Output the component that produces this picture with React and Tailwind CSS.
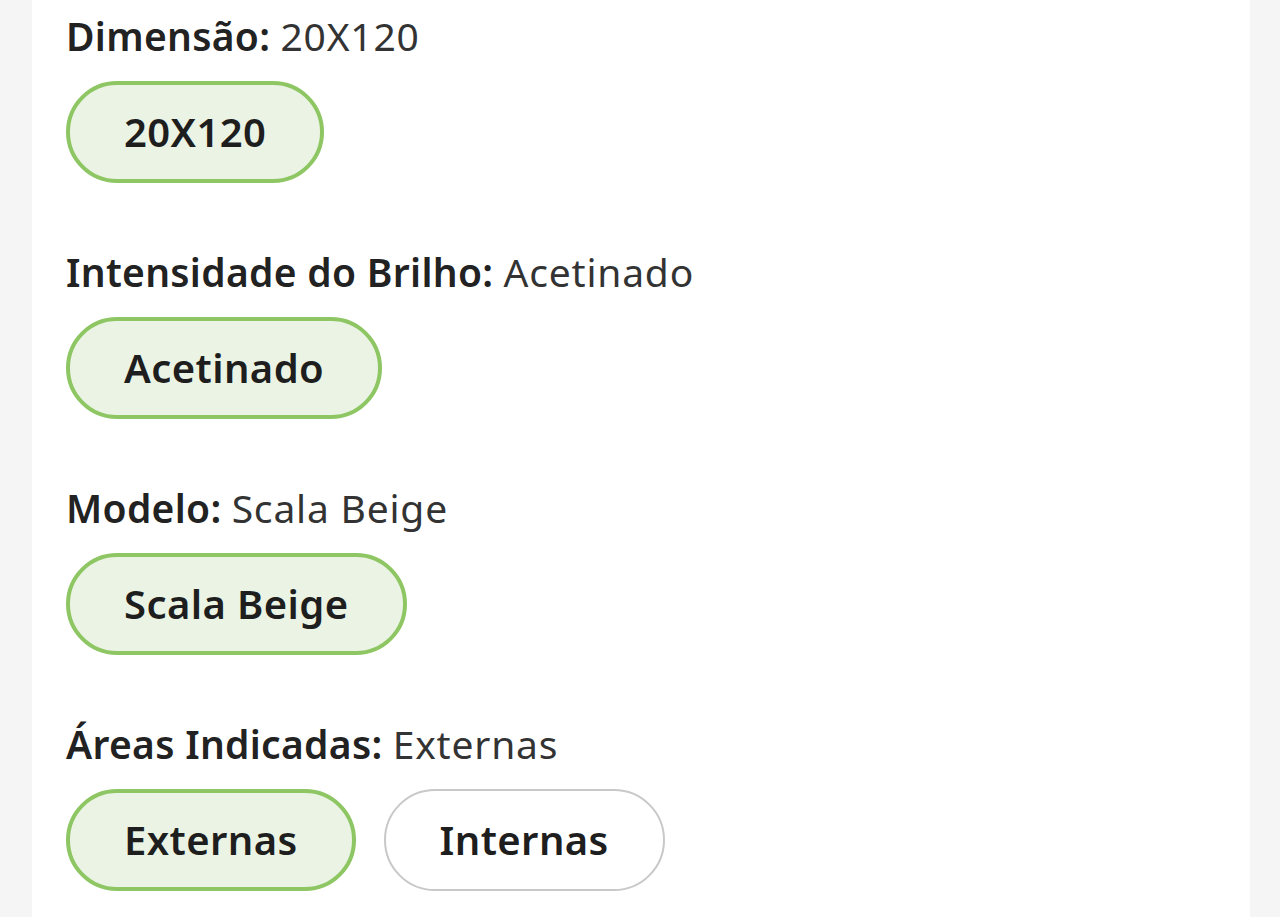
const SECTIONS = [
  { label: 'Dimensão', value: '20X120', options: ['20X120'] },
  { label: 'Intensidade do Brilho', value: 'Acetinado', options: ['Acetinado'] },
  { label: 'Modelo', value: 'Scala Beige', options: ['Scala Beige'] },
  { label: 'Áreas Indicadas', value: 'Externas', options: ['Externas', 'Internas'] },
];

function Pill({ text, active }) {
  return (
    <button
      className={
        active
          ? 'h-[102px] rounded-full border-[4px] border-[#8dc663] bg-[#ebf4e4] px-[54px] text-[40px] font-semibold tracking-[0.4px] text-[#1e1e1e]'
          : 'h-[102px] rounded-full border-2 border-[#c8c8c8] bg-white px-[54px] text-[40px] font-semibold tracking-[0.4px] text-[#1e1e1e]'
      }
    >
      {text}
    </button>
  );
}

export default function App() {
  return (
    <div className="flex min-h-screen bg-[#f5f5f5] font-['Noto_Sans',sans-serif]">
      <div className="ml-[32px] mr-[30px] flex-1 bg-white pl-[34px] pt-[12px] pb-6">
        {SECTIONS.map((s) => (
          <div key={s.label} className="mb-[65px] last:mb-0">
            <p className="text-[39px] leading-[48px] text-[#333]">
              <span className="font-semibold tracking-[0.3px] text-[#222]">{s.label}:</span>{' '}
              <span className="tracking-[0.8px]">{s.value}</span>
            </p>
            <div className="mt-[21px] flex gap-[28px]">
              {s.options.map((o) => (
                <Pill key={o} text={o} active={o === s.value} />
              ))}
            </div>
          </div>
        ))}
      </div>
    </div>
  );
}
